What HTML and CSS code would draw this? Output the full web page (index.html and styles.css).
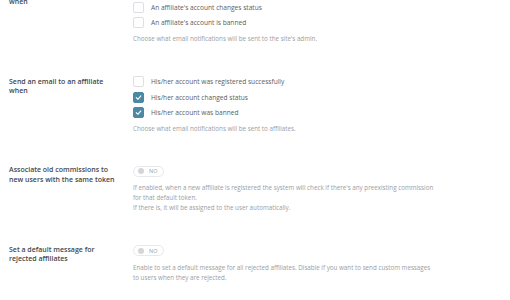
FILE: index.html
```html
<!DOCTYPE html>
<html>
<head>
<meta charset="utf-8">
<link rel="stylesheet" href="styles.css">
</head>
<body>
<div class="page">
  <section class="field">
    <div class="label">Send an email to the admin<br>when</div>
    <div class="control">
      <ul class="checks">
        <li><span class="box"></span>A new affiliate registers</li>
        <li><span class="box"></span>An affiliate's account changes status</li>
        <li><span class="box"></span>An affiliate's account is banned</li>
      </ul>
      <p class="hint">Choose what email notifications will be sent to the site's admin.</p>
    </div>
  </section>

  <section class="field">
    <div class="label">Send an email to an affiliate<br>when</div>
    <div class="control">
      <ul class="checks">
        <li><span class="box"></span>His/her account was registered successfully</li>
        <li><span class="box on"><svg viewBox="0 0 10 10"><path d="M2.5 5.2 L4.3 7 L7.6 3.2" fill="none" stroke="#fff" stroke-width="1.2" stroke-linecap="round" stroke-linejoin="round"/></svg></span>His/her account changed status</li>
        <li><span class="box on"><svg viewBox="0 0 10 10"><path d="M2.5 5.2 L4.3 7 L7.6 3.2" fill="none" stroke="#fff" stroke-width="1.2" stroke-linecap="round" stroke-linejoin="round"/></svg></span>His/her account was banned</li>
      </ul>
      <p class="hint">Choose what email notifications will be sent to affiliates.</p>
    </div>
  </section>

  <section class="field">
    <div class="label">Associate old commissions to<br>new users with the same token</div>
    <div class="control">
      <div class="toggle-row"><span class="toggle"><span class="knob"></span><span class="state">NO</span></span></div>
      <p class="hint tight">If enabled, when a new affiliate is registered the system will check if there's any preexisting commission<br>for that default token.<br>If there is, it will be assigned to the user automatically.</p>
    </div>
  </section>

  <section class="field">
    <div class="label">Set a default message for<br>rejected affiliates</div>
    <div class="control">
      <div class="toggle-row"><span class="toggle"><span class="knob"></span><span class="state">NO</span></span></div>
      <p class="hint tight">Enable to set a default message for all rejected affiliates. Disable if you want to send custom messages<br>to users when they are rejected.</p>
    </div>
  </section>
</div>
</body>
</html>
```

FILE: styles.css
```css
html, body {
  margin: 0;
  padding: 0;
  background: #ffffff;
}

body {
  font-family: "Open Sans", "Noto Sans", sans-serif;
  overflow: hidden;
}

.page {
  margin-top: -16px;
  padding-left: 9px;
}

.field {
  display: grid;
  grid-template-columns: 124px 1fr;
  margin-bottom: 30px;
}

.field:nth-child(3) .label,
.field:nth-child(4) .label {
  padding-top: 1.5px;
}

.label {
  font-size: 7px;
  font-weight: 600;
  line-height: 9.5px;
  color: #43474c;
  padding-top: 3px;
}

.control {
  display: flex;
  flex-direction: column;
}

.checks {
  list-style: none;
  margin: 0;
  padding: 0;
}

.checks li {
  height: 15.5px;
  display: flex;
  align-items: center;
  gap: 7px;
  font-size: 6.6px;
  color: #5a5e64;
  white-space: nowrap;
}

.box {
  width: 9px;
  height: 9px;
  border: 1px solid #dcdfe3;
  border-radius: 2px;
  background: #fff;
  flex: none;
  display: flex;
}

.box.on {
  background: #4b88a4;
  border-color: #4b88a4;
}

.box svg {
  width: 9px;
  height: 9px;
}

.hint {
  margin: 3.25px 0 0 0;
  font-size: 6.25px;
  line-height: 10px;
  color: #9a9ea3;
  white-space: nowrap;
}

.hint.tight {
  margin-top: 4px;
}

.toggle-row {
  height: 15.5px;
  display: flex;
  align-items: center;
}

.toggle {
  width: 31px;
  height: 11px;
  box-sizing: border-box;
  border: 1px solid #e6e8eb;
  border-radius: 6px;
  display: flex;
  align-items: center;
  padding-left: 4px;
  gap: 5px;
}

.knob {
  width: 6px;
  height: 6px;
  border-radius: 50%;
  background: #d3d5d8;
}

.state {
  font-size: 5.5px;
  color: #9a9ea3;
  letter-spacing: 0.2px;
}
```
